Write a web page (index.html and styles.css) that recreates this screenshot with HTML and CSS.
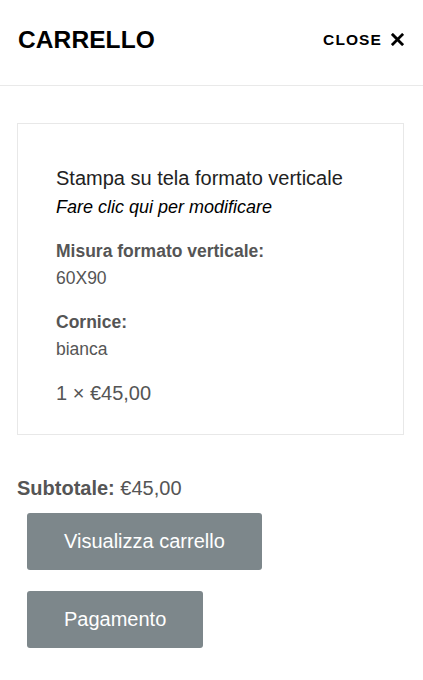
FILE: index.html
```html
<!DOCTYPE html>
<html lang="it">
<head>
<meta charset="utf-8">
<title>Carrello</title>
<link rel="stylesheet" href="styles.css">
</head>
<body>
<div class="cart">
  <header class="cart-header">
    <h2 class="cart-title">CARRELLO</h2>
    <button class="close-btn">CLOSE
      <svg class="close-icon" viewBox="0 0 14 14" width="13" height="13" aria-hidden="true">
        <path d="M2 2 L12 12 M12 2 L2 12" stroke="#000" stroke-width="3" stroke-linecap="square"/>
      </svg>
    </button>
  </header>
  <div class="cart-body">
    <div class="item-card">
      <div class="item-name">Stampa su tela formato verticale</div>
      <div class="item-edit">Fare clic qui per modificare</div>
      <dl class="item-meta">
        <dt>Misura formato verticale:</dt>
        <dd>60X90</dd>
        <dt>Cornice:</dt>
        <dd>bianca</dd>
      </dl>
      <div class="item-qty">1 × €45,00</div>
    </div>
    <p class="subtotal"><strong>Subtotale:</strong> €45,00</p>
    <div class="actions">
      <a class="btn" href="#">Visualizza carrello</a>
      <a class="btn" href="#">Pagamento</a>
    </div>
  </div>
</div>
</body>
</html>
```
FILE: styles.css
```css
* { box-sizing: border-box; }
html, body { margin: 0; padding: 0; background: #fff; }
body { font-family: "Liberation Sans", Arial, sans-serif; color: #555; }

.cart-header {
  display: flex;
  justify-content: space-between;
  align-items: center;
  height: 86px;
  padding: 0 19px 6px 18px;
  border-bottom: 1px solid #e9e9e9;
}
.cart-title {
  margin: 0;
  font-size: 24.5px;
  font-weight: 700;
  color: #000;
  letter-spacing: 0.1px;
}
.close-btn {
  display: flex;
  align-items: center;
  gap: 9px;
  background: none;
  border: 0;
  padding: 0;
  font-family: inherit;
  font-size: 15.5px;
  font-weight: 700;
  letter-spacing: 1.1px;
  color: #000;
}

.cart-body { padding: 37px 19px 0 17px; }

.item-card {
  border: 1px solid #e8e8e8;
  padding: 41px 38px 28px 38px;
}
.item-name {
  font-size: 20px;
  color: #222;
  line-height: 26px;
}
.item-edit {
  font-size: 18px;
  font-style: italic;
  color: #000;
  line-height: 22px;
  margin-top: 5px;
}
.item-meta { margin: 20px 0 0; font-size: 17.5px; line-height: 27px; }
.item-meta dt { font-weight: 700; color: #555; }
.item-meta dd { margin: 0 0 17px; color: #555; }
.item-qty { font-size: 20px; color: #555; line-height: 26px; margin-top: 6px; }

.subtotal {
  margin: 41px 0 0;
  font-size: 20px;
  line-height: 24px;
  color: #555;
}
.subtotal strong { font-weight: 700; }

.actions {
  display: flex;
  flex-direction: column;
  align-items: flex-start;
  gap: 21px;
  margin: 13px 0 0 10px;
}
.btn {
  display: inline-block;
  background: #7d878b;
  color: #fff;
  text-decoration: none;
  font-size: 20px;
  line-height: 57px;
  padding: 0 37px;
  border-radius: 3px;
}
```
